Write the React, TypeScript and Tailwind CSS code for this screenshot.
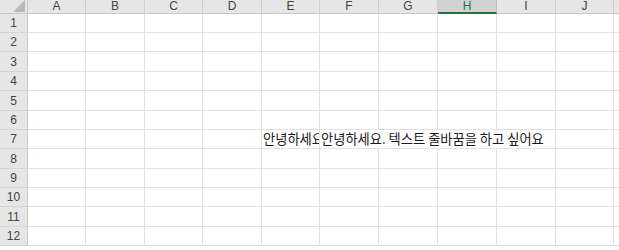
import React from "react";

const columns = [
  { label: "A", w: "w-[58px]" },
  { label: "B", w: "w-[59px]" },
  { label: "C", w: "w-[58px]" },
  { label: "D", w: "w-[59px]" },
  { label: "E", w: "w-[58px]" },
  { label: "F", w: "w-[59px]" },
  { label: "G", w: "w-[59px]" },
  { label: "H", w: "w-[59px]" },
  { label: "I", w: "w-[59px]" },
  { label: "J", w: "w-[58px]" },
  { label: "K", w: "w-[58px]" },
];

const rowHeights = [
  "h-[19px]",
  "h-[19px]",
  "h-[20px]",
  "h-[19px]",
  "h-[20px]",
  "h-[19px]",
  "h-[19px]",
  "h-[20px]",
  "h-[19px]",
  "h-[19px]",
  "h-[20px]",
  "h-[19px]",
];

const font = "font-['Segoe_UI','Liberation_Sans','Noto_Sans',sans-serif]";
const krFont = "font-['Noto_Sans_CJK_KR','Noto_Sans_CJK_JP',sans-serif]";

export default function App() {
  return (
    <div className={`w-[619px] h-[250px] overflow-hidden bg-white ${font}`}>
      <div className="flex h-[14px]">
        <div className="w-[28px] shrink-0 bg-[#e6e6e6] border-r border-b border-[#c8c8c8] flex items-end justify-end">
          <svg width="12" height="12" viewBox="0 0 12 12" className="mr-[2px] mb-[1px]">
            <polygon points="12,0 12,12 0,12" fill="#b9b9b9" />
          </svg>
        </div>
        {columns.map((c) => (
          <div
            key={c.label}
            className={`${c.w} shrink-0 border-r flex items-start justify-center text-[12px] leading-[12px] ${
              c.label === "H"
                ? "bg-[#d2d2d2] border-b-2 border-b-[#217346] border-r-[#bdbdbd] text-[#217346]"
                : "bg-[#e6e6e6] border-b border-b-[#c8c8c8] border-r-[#d0d0d0] text-[#444]"
            }`}
          >
            {c.label}
          </div>
        ))}
      </div>
      {rowHeights.map((h, i) => (
        <div key={i} className={`flex ${h}`}>
          <div className="w-[28px] shrink-0 bg-[#e6e6e6] border-r border-b border-r-[#c8c8c8] border-b-[#d4d4d4] flex items-center justify-center text-[12px] text-[#444] leading-none">
            {i + 1}
          </div>
          {columns.map((c, j) => (
            <div
              key={c.label}
              className={`${c.w} shrink-0 border-r border-b border-[#e1e1e1] relative ${
                i === 6 && j === 5 ? "overflow-visible" : "overflow-hidden"
              }`}
            >
              {i === 6 && j === 4 && (
                <span className={`absolute left-[1px] top-0 whitespace-nowrap text-[13.25px] leading-[18px] text-[#1a1a1a] ${krFont}`}>
                  안녕하세요
                </span>
              )}
              {i === 6 && j === 5 && (
                <span className={`absolute left-[1px] top-0 z-10 bg-white whitespace-nowrap text-[13.25px] leading-[18px] text-[#1a1a1a] ${krFont}`}>
                  안녕하세요. 텍스트 줄바꿈을 하고 싶어요
                </span>
              )}
            </div>
          ))}
        </div>
      ))}
    </div>
  );
}
